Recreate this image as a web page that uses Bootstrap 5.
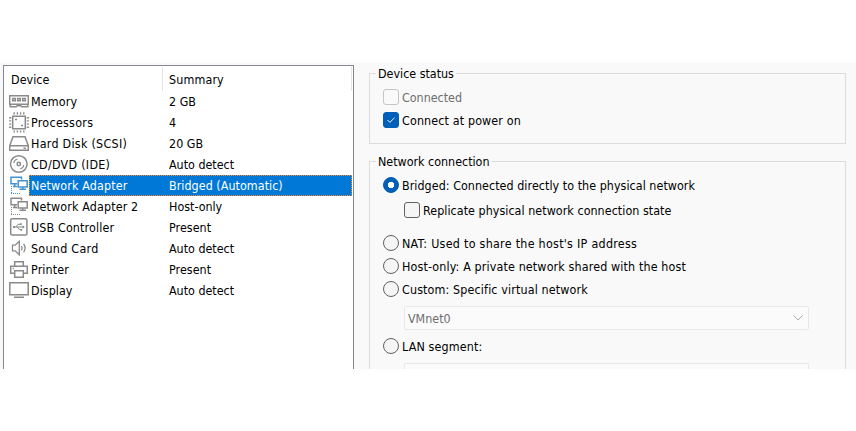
<!DOCTYPE html>
<html lang="en">
<head>
<meta charset="utf-8">
<meta name="viewport" content="width=device-width, initial-scale=1">
<title>Virtual Machine Settings</title>
<link href="https://cdn.jsdelivr.net/npm/bootstrap@5.3.0/dist/css/bootstrap.min.css" rel="stylesheet">
<style>
body{font:13px/21px "DejaVu Sans Condensed","DejaVu Sans",sans-serif;font-stretch:condensed;font-size:12.4px;color:#000;background:#fff;overflow:hidden;white-space:nowrap}
.settings{margin-top:63px;height:306px;background:#f9f9f9}
.devices{width:351px;height:304px;margin:2px 0 0 3px;border:1px solid #828790;border-bottom:0;background:#fff}
.dev-head{height:25px;padding:1px 1px 0 0}
.dev-head>div{height:24px;line-height:26px;border-right:1px solid #e5e5e5}
.c-name{width:159px;padding-left:7px}
.c-sum{padding-left:6px}
.dev-row{height:21px;padding:0 1px 0 5px}
.dev-row svg{width:20px;height:21px;fill:none;stroke:#8a8a8a;stroke-width:1.5}
.dev-cell{border:1px solid transparent;padding-left:1px;line-height:20px}
.dev-cell>span:first-child{width:138px}
.chosen .dev-cell{background:#0078d7;color:#fff;border:1px dotted #ff8a28}
.dev-row.chosen svg{stroke:#4592cc}
.panel{margin-left:15px;width:477px;padding-top:10px}
.group{border:1px solid #dcdcdc;padding-left:13px}
.g-title{width:max-content;height:20px;line-height:22px;margin:-11px 0 3px -7px;padding:0 2px;background:#f9f9f9}
.status{height:71px}
.network{height:208px;margin-top:17px;border-bottom:0}
.opt{height:23px;gap:3px;line-height:20px;padding-bottom:1px}
.opt>span{padding-top:2px}
.opt .form-check-input{width:16px;height:16px;margin:0;border:1px solid #626262;background-color:#f5f5f5;box-shadow:none}
.opt .form-check-input[type=checkbox]{border-radius:3px}
.opt .form-check-input:checked{background-color:#005fb8;border-color:#005fb8}
.opt .form-check-input[type=checkbox]:checked{background-image:url("data:image/svg+xml,%3csvg xmlns='http://www.w3.org/2000/svg' viewBox='0 0 16 16'%3e%3cpath d='M4 8l2.7 2.7L12 5.5' fill='none' stroke='white' stroke-width='1.1'/%3e%3c/svg%3e")}
.opt .form-check-input[type=radio]:checked{background-image:radial-gradient(circle,#fff 0 2.9px,transparent 3.5px)}
.off{color:#6d6d6d}
.opt.off .form-check-input{opacity:1;border-color:#c5c5c5;background-color:#fafafa}
.nested{margin:2px 0 10px 21px}
.after-drop{margin-top:5px}
.drop{width:405px;height:24px;margin:5px 0 0 21px;padding:0 5px 0 3px;border:1px solid #e8e8e8;border-radius:2px;background:#fbfbfb;line-height:23px;flex:none}
.drop-cut{height:6px}
.t1{letter-spacing:.05px}
.t2{letter-spacing:.14px}
.t3{letter-spacing:.28px}
</style>
</head>
<body>
<svg class="d-none">
<symbol id="net" viewBox="0 0 20 21"><path d="M2 2.2h10.5v6.6H2zM5.7 8.8v2.7M4 11.5h4"/><path d="M8 4.500h11v10.500H8z" fill="#fff" stroke="none"/><path d="M9.2 5.7h9V12h-9zM13.7 12v2M10.5 14.2H17"/><path d="M2.5 11v7M2 18.5h10" stroke-dasharray="1 1" stroke-width="1"/></symbol>
</svg>
<main class="settings d-flex">
<section class="devices flex-shrink-0">
<div class="dev-head d-flex"><div class="c-name t1">Device</div><div class="c-sum t2 flex-grow-1">Summary</div></div>
<div class="dev-row d-flex"><svg viewBox="0 0 20 21"><path d="M.7 4.7h18.6v8.6H.7zM1.2 13.3v2.5h6l1-1h3.6l1 1h6v-2.5"/><path d="M3.7 7.6h2.6v2.2H3.7zM8.7 7.6h2.6v2.2H8.7zM13.7 7.6h2.6v2.2h-2.6z"/></svg><div class="dev-cell d-flex flex-grow-1"><span class="t2">Memory</span><span>2 GB</span></div></div>
<div class="dev-row d-flex"><svg viewBox="0 0 20 21"><path d="M3.7 4.2h12.6v12.6H3.7z"/><path d="M4.5 1.3h11M4.5 19.5h11" stroke-width="2.2" stroke-dasharray="1.4 1.8"/><path d="M1.2 5v11M18.8 5v11" stroke-width="2.2" stroke-dasharray="1.4 1.8"/><path d="M6 7.5h2M12 13.5h2" stroke-width="1.6"/></svg><div class="dev-cell d-flex flex-grow-1"><span class="t3">Processors</span><span>4</span></div></div>
<div class="dev-row d-flex"><svg viewBox="0 0 20 21"><path d="M.7 12.7 4 3.7h12l3.3 9v4.6H.7zM.7 12.7h18.6M14.5 15.2h2.3"/></svg><div class="dev-cell d-flex flex-grow-1"><span class="t3">Hard Disk (SCSI)</span><span class="t1">20 GB</span></div></div>
<div class="dev-row d-flex"><svg viewBox="0 0 20 21"><circle cx="9.8" cy="10" r="8.3"/><circle cx="9.8" cy="10" r="1.7"/><path d="M4.8 9a5 5 0 0 1 3.6-4M14.8 11a5 5 0 0 1-3.6 4" stroke-width="1.2"/></svg><div class="dev-cell d-flex flex-grow-1"><span class="t3">CD/DVD (IDE)</span><span>Auto detect</span></div></div>
<div class="dev-row chosen d-flex"><svg><use href="#net"/></svg><div class="dev-cell d-flex flex-grow-1"><span class="t2">Network Adapter</span><span class="t1">Bridged (Automatic)</span></div></div>
<div class="dev-row d-flex"><svg><use href="#net"/></svg><div class="dev-cell d-flex flex-grow-1"><span class="t2">Network Adapter 2</span><span>Host-only</span></div></div>
<div class="dev-row d-flex"><svg viewBox="0 0 20 21"><rect x="1.7" y="1.7" width="16.2" height="16.2" rx="1.5"/><path d="M4.5 10h10M7 10l2-2.7h2.5M8.5 10l2 2.7H12" stroke-width="1"/><path d="M13.5 8.3l2.3 1.7-2.3 1.7zM11 6.3h1.7V8H11zM11.5 12h1.7v1.7h-1.7zM4 9h2v2H4z" fill="#8a8a8a" stroke="none"/></svg><div class="dev-cell d-flex flex-grow-1"><span class="t2">USB Controller</span><span class="t1">Present</span></div></div>
<div class="dev-row d-flex"><svg viewBox="0 0 20 21"><path d="M3.5 7.2h2.6l4.2-4v13.6l-4.2-4H3.5zM12.4 8q1.3 2 0 4.4M14.6 5.8q3 4.2 0 8.6" stroke-width="1.3"/></svg><div class="dev-cell d-flex flex-grow-1"><span class="t3">Sound Card</span><span>Auto detect</span></div></div>
<div class="dev-row d-flex"><svg viewBox="0 0 20 21"><path d="M5.7 7.3V2.7h8.6v4.6M5 14.3H1.7v-7h16.6v7H15M5.7 11.7h8.6v6.6H5.7zM3.7 9.5h1.2"/></svg><div class="dev-cell d-flex flex-grow-1"><span class="t2">Printer</span><span class="t1">Present</span></div></div>
<div class="dev-row d-flex"><svg viewBox="0 0 20 21"><path d="M.8 2.8h18.4v11.9H.8zM5 17.3h10"/></svg><div class="dev-cell d-flex flex-grow-1"><span class="t1">Display</span><span>Auto detect</span></div></div>
</section>
<section class="panel flex-shrink-0">
<div class="group status">
<div class="g-title">Device status</div>
<label class="opt off d-flex align-items-center"><input class="form-check-input" type="checkbox" disabled><span>Connected</span></label>
<label class="opt d-flex align-items-center"><input class="form-check-input" type="checkbox" checked><span class="t2">Connect at power on</span></label>
</div>
<div class="group network d-flex flex-column">
<div class="g-title">Network connection</div>
<label class="opt d-flex align-items-center"><input class="form-check-input" type="radio" name="conn" checked><span class="t1">Bridged: Connected directly to the physical network</span></label>
<label class="opt nested d-flex align-items-center"><input class="form-check-input" type="checkbox"><span class="t1">Replicate physical network connection state</span></label>
<label class="opt d-flex align-items-center"><input class="form-check-input" type="radio" name="conn"><span class="t3">NAT: Used to share the host's IP address</span></label>
<label class="opt d-flex align-items-center"><input class="form-check-input" type="radio" name="conn"><span class="t2">Host-only: A private network shared with the host</span></label>
<label class="opt d-flex align-items-center"><input class="form-check-input" type="radio" name="conn"><span class="t2">Custom: Specific virtual network</span></label>
<div class="drop off d-flex justify-content-between align-items-center"><span>VMnet0</span><svg width="10" height="6" viewBox="0 0 10 6" fill="none" stroke="#aaa"><path d="M.5.5 5 5 9.5.5"/></svg></div>
<label class="opt after-drop d-flex align-items-center"><input class="form-check-input" type="radio" name="conn"><span class="t2">LAN segment:</span></label>
<div class="drop drop-cut border-bottom-0 rounded-bottom-0"></div>
</div>
</section>
</main>
<script src="https://cdn.jsdelivr.net/npm/bootstrap@5.3.0/dist/js/bootstrap.bundle.min.js"></script>
</body>
</html>
